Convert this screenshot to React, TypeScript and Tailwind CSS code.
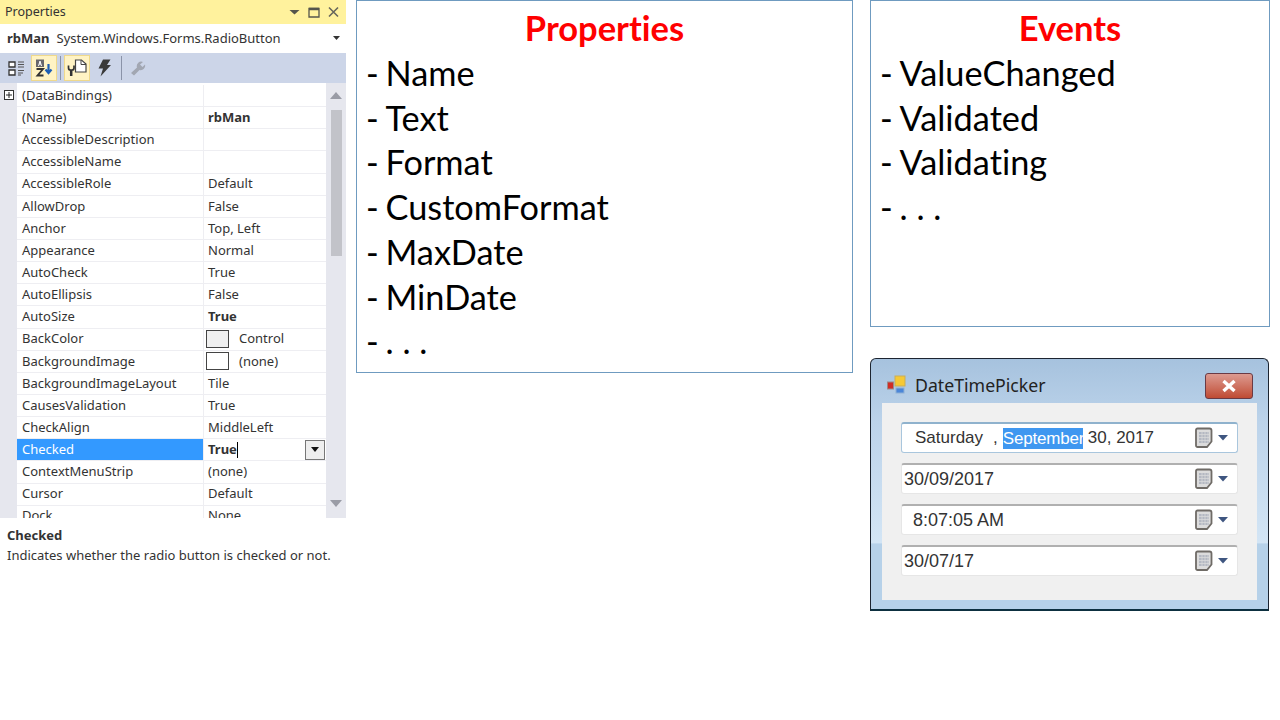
import React from 'react';

const rows: { name: string; value?: string; bold?: boolean; swatch?: string }[] = [
  { name: '(DataBindings)' },
  { name: '(Name)', value: 'rbMan', bold: true },
  { name: 'AccessibleDescription' },
  { name: 'AccessibleName' },
  { name: 'AccessibleRole', value: 'Default' },
  { name: 'AllowDrop', value: 'False' },
  { name: 'Anchor', value: 'Top, Left' },
  { name: 'Appearance', value: 'Normal' },
  { name: 'AutoCheck', value: 'True' },
  { name: 'AutoEllipsis', value: 'False' },
  { name: 'AutoSize', value: 'True', bold: true },
  { name: 'BackColor', value: 'Control', swatch: 'bg-[#f0f0f0]' },
  { name: 'BackgroundImage', value: '(none)', swatch: 'bg-white' },
  { name: 'BackgroundImageLayout', value: 'Tile' },
  { name: 'CausesValidation', value: 'True' },
  { name: 'CheckAlign', value: 'MiddleLeft' },
  { name: 'Checked', value: 'True', bold: true },
  { name: 'ContextMenuStrip', value: '(none)' },
  { name: 'Cursor', value: 'Default' },
  { name: 'Dock', value: 'None' },
];

const CalendarIcon = () => (
  <svg width="34" height="22" viewBox="0 0 34 22" className="shrink-0">
    <path d="M2.500 1.500h12a2 2 0 0 1 2 2v11l-4.500 5.500H2.500a1.500 1.500 0 0 1-1.500-1.500V3a1.500 1.500 0 0 1 1.500-1.500z" fill="#dcdcdc" stroke="#6f6b66" strokeWidth="1.800" />
    <path d="M4 5h10v11H4z" fill="#b4b8c2" />
    <path d="M4 7.500h10M4 10.500h10M4 13.500h10M7 5v11M10 5v11M13 5v11" stroke="#dddddd" strokeWidth="0.700" />
    <path d="M23 8h10l-5 5.500z" fill="#3f5680" />
  </svg>
);

function Picker({ text, indent, selected }: { text?: string; indent: string; selected?: boolean }) {
  const border = selected ? 'border-[#a9c6dd] border-t-[#8fb2cd]' : 'border-[#e6e6e6] border-t-[#b0b0b0]';
  return (
    <div className={`h-[31px] flex items-center justify-between bg-white border border-t-2 rounded-[3px] pr-[8px] text-[18px] text-[#333] font-['Liberation_Sans',sans-serif] ${border}`}>
      {selected ? (
        <div className={`flex items-center ${indent} whitespace-pre text-[17px]`}>
          <span>Saturday</span>
          <span className="ml-[10px] mr-[5px]">,</span>
          <span className="bg-[#3f97f0] text-white leading-[21px] w-[80px] overflow-hidden tracking-[-0.200px]">September</span>
          <span className="ml-[5px]">30, 2017</span>
        </div>
      ) : (
        <div className={indent}>{text}</div>
      )}
      <CalendarIcon />
    </div>
  );
}

function BulletList({ items }: { items: string[] }) {
  return (
    <ul className="pl-[9px] mt-[1px] text-[34.300px] leading-[44.700px]">
      {items.map((t) => (
        <li key={t} className="whitespace-pre">
          <span>-</span> <span className="-ml-[2px]">{t}</span>
        </li>
      ))}
    </ul>
  );
}

export default function App() {
  return (
    <div className="w-[1280px] h-[720px] bg-white flex items-start overflow-hidden font-['Noto_Sans',sans-serif]">
      {/* properties window */}
      <div className="w-[346px] shrink-0 text-[13px] text-[#333]">
        <div className="h-[24px] bg-[#fff29d] flex items-center justify-between pl-[5px] pr-[7px] text-[12.500px]">
          <span>Properties</span>
          <div className="flex items-center gap-[8px]">
            <svg width="11" height="12" viewBox="0 0 11 12"><path d="M0.500 4h10L5.500 8.500z" fill="#55554c" /></svg>
            <svg width="12" height="12" viewBox="0 0 12 12"><path d="M1 2.500h10v8.500H1z" fill="none" stroke="#55554c" strokeWidth="1.300" /><path d="M1 3h10" stroke="#55554c" strokeWidth="2.500" /></svg>
            <svg width="11" height="12" viewBox="0 0 11 12"><path d="M1 1.500l9 9M10 1.500l-9 9" stroke="#66665c" strokeWidth="1.600" /></svg>
          </div>
        </div>
        <div className="h-[29px] flex items-center pl-[7px] pr-[6px] justify-between">
          <div className="whitespace-nowrap">
            <span className="font-bold">rbMan</span>
            <span className="ml-[7px]">System.Windows.Forms.RadioButton</span>
          </div>
          <svg width="7" height="5" viewBox="0 0 7 5"><path d="M0 0h7L3.500 4z" fill="#333" /></svg>
        </div>
        <div className="h-[30px] bg-[#ccd5e8] flex items-center pl-[3px]">
          <div className="w-[26px] h-[26px] flex items-center justify-center">
            <svg width="17" height="17" viewBox="0 0 17 17">
              <path d="M1 2h6v5H1zM1 10h6v5H1z" fill="#fff" stroke="#333" strokeWidth="1.300" />
              <path d="M10 2h6M10 4.500h6M10 7h6M10 10.500h6M10 13h5M10 15h3" stroke="#555" strokeWidth="1.200" />
            </svg>
          </div>
          <div className="ml-[2px] w-[26px] h-[26px] bg-[#fff3c4] border border-[#efd98c] flex items-center justify-center">
            <svg width="18" height="18" viewBox="0 0 18 18">
              <path d="M1 0.500h8v7.500H1z" fill="#66666c" />
              <path d="M3.500 7l1.500-5 1.500 5M4 5h2" stroke="#fff" strokeWidth="1" fill="none" />
              <path d="M1.500 10h6.500l-5.500 6.500h6" stroke="#333" strokeWidth="1.900" fill="none" />
              <path d="M13.500 5v9M10.500 10.500l3 3.500 3-3.500" stroke="#1e5fb4" strokeWidth="2.200" fill="none" />
            </svg>
          </div>
          <div className="w-[1px] h-[24px] bg-[#8a93a8] mx-[3px]" />
          <div className="w-[26px] h-[26px] bg-[#fff3c4] border border-[#efd98c] flex items-center justify-center">
            <svg width="20" height="18" viewBox="0 0 20 18">
              <path d="M8.500 1h6l4.500 4v8H8.500z" fill="#fff" stroke="#444" strokeWidth="1.200" />
              <path d="M14 1v4.500h5" fill="none" stroke="#444" />
              <path d="M1.500 6.500v2.500a2 2 0 0 0 2 2h1.500a2 2 0 0 0 2-2V6.500" stroke="#333" strokeWidth="1.700" fill="none" />
              <path d="M4.200 11v6" stroke="#333" strokeWidth="2.500" />
            </svg>
          </div>
          <div className="ml-[1px] w-[26px] h-[26px] flex items-center justify-center">
            <svg width="13" height="18" viewBox="0 0 13 18"><path d="M5 0.500h7.500L9 6h4L2.500 17.500l2.500-8H0.500z" fill="#3a3a3a" /></svg>
          </div>
          <div className="w-[1px] h-[24px] bg-[#8a93a8] ml-[4px] mr-[3px]" />
          <div className="w-[26px] h-[26px] flex items-center justify-center">
            <svg width="16" height="16" viewBox="0 0 16 16"><path d="M1 13l6-5.500a4.500 4.500 0 0 1 6-5.500l-3 2.500 2.500 2.500L15 4.500a4.500 4.500 0 0 1-5.500 5.500L4 15.500z" fill="#a2a7b2" /></svg>
          </div>
        </div>
        <div className="h-[435px] bg-[#e6e7ee] flex overflow-hidden">
          <div className="w-[17px] shrink-0 pt-[7px] pl-[4px]">
            <div className="w-[10px] h-[10px] border border-[#333] bg-white flex items-center justify-center">
              <svg width="8" height="8" viewBox="0 0 8 8"><path d="M4 1v6M1 4h6" stroke="#222" /></svg>
            </div>
          </div>
          <div className="w-[309px] shrink-0 pt-[2px] bg-white">
            {rows.map((r) => {
              const active = r.name === 'Checked';
              return (
                <div key={r.name} className="h-[22.150px] flex bg-white border-b border-[#eeeef2]">
                  <div className={`w-[187px] shrink-0 pl-[5px] flex items-center border-r border-[#eeeef2] ${active ? 'bg-[#3399ff] text-white' : ''}`}>{r.name}</div>
                  <div className={`flex-1 pl-[4px] flex items-center ${r.bold ? 'font-bold' : ''}`}>
                    {r.swatch && <div className={`w-[23px] h-[18px] border border-[#444] -ml-[2px] mr-[10px] ${r.swatch}`} />}
                    <span>{r.value}</span>
                    {active && (
                      <>
                        <div className="w-[1px] h-[16px] bg-black" />
                        <div className="ml-auto mr-[1px] w-[20px] h-[20px] border border-[#777] bg-[#eeeeee] flex items-center justify-center">
                          <svg width="8" height="5" viewBox="0 0 8 5"><path d="M0 0h8L4 5z" fill="#111" /></svg>
                        </div>
                      </>
                    )}
                  </div>
                </div>
              );
            })}
          </div>
          <div className="w-[20px] shrink-0 flex flex-col items-center">
            <svg width="12" height="7" viewBox="0 0 12 7" className="mt-[9px]"><path d="M6 0l6 7H0z" fill="#9a9ca6" /></svg>
            <div className="w-[11px] h-[146px] bg-[#c2c3c9] mt-[11px]" />
            <svg width="12" height="7" viewBox="0 0 12 7" className="mt-[244px]"><path d="M0 0h12L6 7z" fill="#9a9ca6" /></svg>
          </div>
        </div>
        <div className="pl-[7px] pt-[7px]">
          <div className="font-bold leading-[20px]">Checked</div>
          <div className="leading-[21px] whitespace-nowrap">Indicates whether the radio button is checked or not.</div>
        </div>
      </div>

      {/* properties list */}
      <div className="ml-[10px] w-[497px] h-[373px] shrink-0 border border-[#6f9bc0] font-['Lato',sans-serif] text-black [font-variant-ligatures:none]">
        <h2 className="text-center text-[#ff0000] font-bold text-[34.500px] leading-[44px] mt-[5px]">Properties</h2>
        <BulletList items={['Name', 'Text', 'Format', 'CustomFormat', 'MaxDate', 'MinDate', '. . .']} />
      </div>

      <div className="ml-[17px] w-[400px] shrink-0">
        {/* events list */}
        <div className="h-[327px] border border-[#6f9bc0] font-['Lato',sans-serif] text-black [font-variant-ligatures:none]">
          <h2 className="text-center text-[#ff0000] font-bold text-[34.500px] leading-[44px] mt-[5px]">Events</h2>
          <BulletList items={['ValueChanged', 'Validated', 'Validating', '. . .']} />
        </div>

        {/* form window */}
        <div className="mt-[31px] w-[399px] h-[253px] rounded-t-[6px] border border-[#1c2430] border-b-2 border-b-[#0d3040] bg-[linear-gradient(to_bottom,#a6c2de_0%,#bcd3ea_25%,#d3e5f5_73.500%,#b6d1e9_74%,#b6d1e9_100%)] px-[11px] pb-[9px] flex flex-col">
          <div className="h-[44px] shrink-0 flex items-center justify-between pt-[9px] pr-[4px]">
            <div className="flex items-center gap-[8px] pl-[5px] text-[17.700px] text-[#222] font-['Noto_Sans',sans-serif]">
              <svg width="20" height="20" viewBox="0 0 20 20">
                <rect x="0.500" y="7" width="6" height="7" fill="#d02c24" stroke="#9c8a8a" />
                <rect x="8" y="1" width="10" height="10" fill="#f6c935" stroke="#c9ad5a" />
                <rect x="9" y="13" width="8" height="5" fill="#4b86d8" stroke="#8fb0d4" />
              </svg>
              <span>DateTimePicker</span>
            </div>
            <div className="w-[48px] h-[26px] rounded-[3px] border border-[#6a3a44] bg-gradient-to-b from-[#dc9a90] to-[#bf4a33] flex items-center justify-center">
              <svg width="18" height="14" viewBox="0 0 18 14"><path d="M3.500 2l11 10M14.500 2l-11 10" stroke="#fff" strokeWidth="3.400" /></svg>
            </div>
          </div>
          <div className="flex-1 bg-[#f0f0f0] pt-[19px] px-[19px] flex flex-col gap-[10px]">
            <Picker indent="pl-[13px]" selected />
            <Picker text="30/09/2017" indent="pl-[2px]" />
            <Picker text="8:07:05 AM" indent="pl-[11px]" />
            <Picker text="30/07/17" indent="pl-[2px]" />
          </div>
        </div>
      </div>
    </div>
  );
}
